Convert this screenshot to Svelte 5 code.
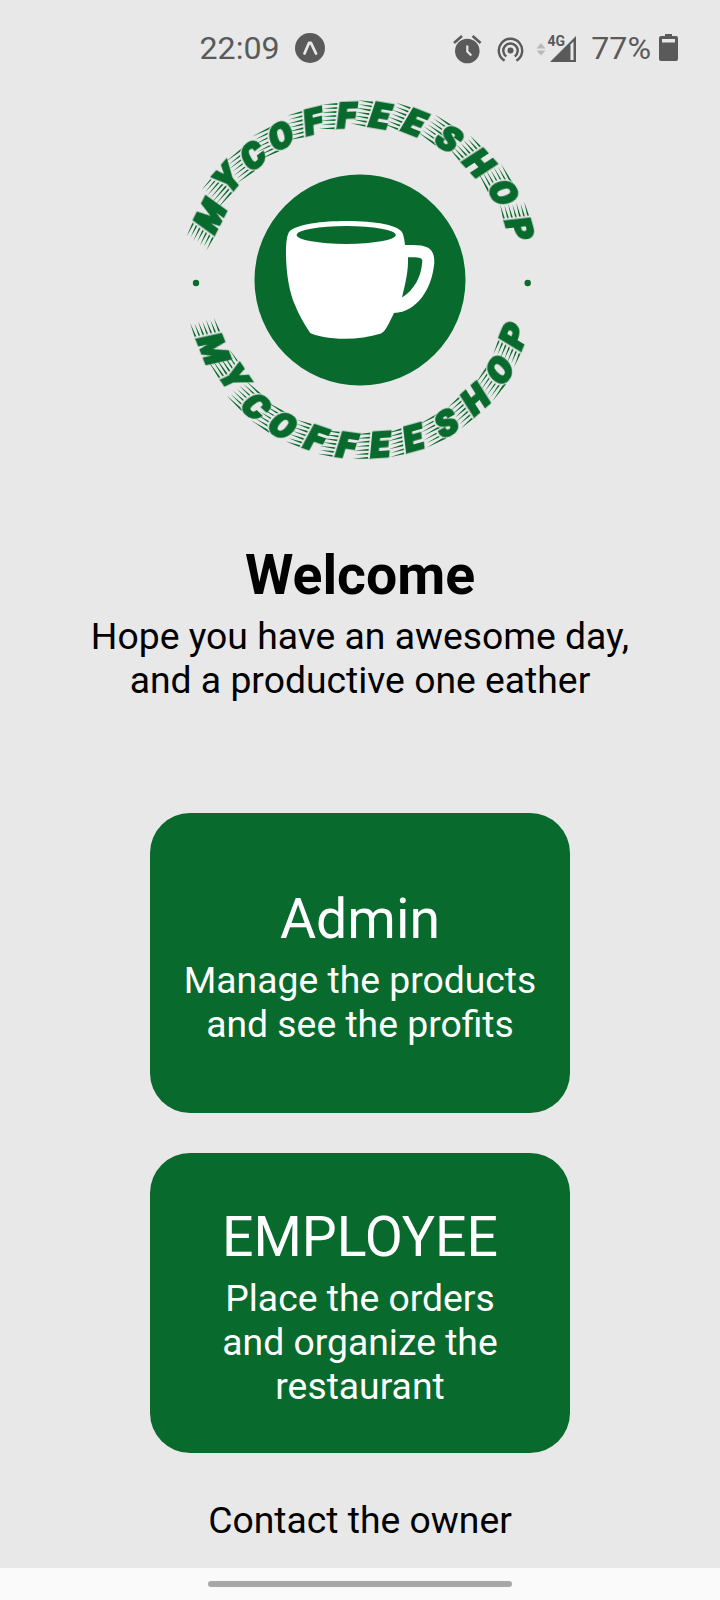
<script>
  const green = '#096a2d';
  const cx = 361;
  const cy = 282;
  const top = [
    ['M', 210.5, 215.7], ['Y', 227.7, 178.3], ['C', 253.3, 155.7], ['O', 281, 136],
    ['F', 313.3, 121.7], ['F', 346.7, 115.7], ['E', 380, 116], ['E', 414.3, 122.7],
    ['S', 449, 139], ['H', 479, 163.3], ['O', 503.3, 192.7], ['P', 519.3, 229]
  ];
  const bottom = [
    ['M', 213.3, 349.3], ['Y', 234, 377.7], ['C', 256, 406.7], ['O', 282.7, 425.7],
    ['F', 315.7, 439], ['F', 346.7, 445.7], ['E', 380, 445], ['E', 413.3, 438.3],
    ['S', 446.7, 423.3], ['H', 475.7, 399.3], ['O', 500, 370], ['P', 514, 335.7]
  ];
  const half = { M: 14, Y: 11, C: 10.5, O: 11, F: 9, E: 9, S: 10.5, H: 11.5, P: 10 };
  const inset = { Y: 8, S: 5, O: 5, C: 5 };
  const deg = 180 / Math.PI;

  function speedLines(ch) {
    const edge = -half[ch];
    let d = '';
    for (let i = 0; i < 7; i++) {
      const y = -12 + i * 4;
      const start = edge - 17 + (i % 2) * 1.5;
      const end = edge + (inset[ch] ?? 1);
      d += `M${start} ${y}L${end} ${y - 1.1}V${y + 1.1}Z`;
    }
    return d;
  }

  const letters = [
    ...top.map(([ch, x, y]) => ({ ch, x, y, r: Math.atan2(x - cx, cy - y) * deg + 3 })),
    ...bottom.map(([ch, x, y]) => ({ ch, x, y, r: -Math.atan2(x - cx, y - cy) * deg + 3 }))
  ];
</script>

<div class="screen">
  <header class="status">
    <span class="clock">22:09</span>
    <svg class="expo" width="30" height="30" viewBox="0 0 30 30">
      <circle cx="15" cy="15" r="15" fill="#5a5a5a" />
      <path d="M9.500 20.500 14 10h2l5 10.500" fill="none" stroke="#e8e8e8" stroke-width="2.800" stroke-linecap="round" stroke-linejoin="round" />
    </svg>
    <svg class="tray" width="130" height="34" viewBox="450 30 130 34">
      <g fill="#5a5a5a">
        <circle cx="468.300" cy="50" r="12.300" />
        <path d="M455 42l8-7M481.600 42l-8-7" stroke="#5a5a5a" stroke-width="2.600" />
        <path d="M468.300 44.500v6l4 4" fill="none" stroke="#e8e8e8" stroke-width="2.200" />
        <circle cx="511.500" cy="49.500" r="3" />
        <g fill="none" stroke="#5a5a5a" stroke-width="2.400">
          <path d="M507.300 55.500a7.200 7.200 0 1 1 8.400 0" />
          <path d="M505.600 59.600a11.700 11.700 0 1 1 11.800 0" />
        </g>
        <path d="M551 61 577 35v26z" />
        <path d="M571.500 43.500 574.500 40.500V59h-3z" fill="#e8e8e8" />
      </g>
      <path d="M537.500 47.500l4.500-5.500 4.500 5.500zM537.500 49.500h9l-4.500 5z" fill="#b9b9b9" />
      <text x="548.500" y="44.500" class="net">4G</text>
    </svg>
    <span class="percent">77%</span>
    <svg class="battery" width="19" height="28" viewBox="0 0 19 28">
      <path d="M6 0h7v2h4a2 2 0 0 1 2 2v21a2 2 0 0 1-2 2H2a2 2 0 0 1-2-2V4a2 2 0 0 1 2-2h4z" fill="#5a5a5a" />
      <path d="M3 5h13v3.500H3z" fill="#e8e8e8" />
    </svg>
  </header>

  <svg class="logo" width="360" height="372" viewBox="180 96 360 372">
    <circle cx="360" cy="280" r="105.500" fill={green} />
    <path fill="#fff" d="M289 232C296 224 322 221 347 221C375 221 399 225 402.500 233C404 237 404.500 241 405 245H412C430 245 434.500 250 434.300 263C432 289 417 312 394 313C389 323 386 331 381 333.500C370 337 357 338.700 345 338.700C330 338.700 315 336 310 332.700C303 322 299 315 295 305C289 292 285.500 270 286 248C286.500 240 287 236 289 232Z" />
    <ellipse cx="346.200" cy="235" rx="49.500" ry="9" fill={green} />
    <path fill={green} d="M408 257.300C417 257 422.500 257 422.300 261C421.500 277 414 290 402 297.500C405.500 283 408.500 271 408 257.300Z" />
    <circle cx="196" cy="283" r="3.200" fill={green} />
    <circle cx="527.700" cy="283" r="3.200" fill={green} />
    {#each letters as l}
      <g transform="translate({l.x} {l.y}) rotate({l.r}) skewX(-9)" fill={green}>
        <path d={speedLines(l.ch)} />
        <text class="glyph" x="0" y="12.300">{l.ch}</text>
      </g>
    {/each}
  </svg>

  <section class="intro">
    <h1>Welcome</h1>
    <p>Hope you have an awesome day,<br />and a productive one eather</p>
  </section>

  <main class="roles">
    <button class="card">
      <span class="title">Admin</span>
      <span class="text">Manage the products<br />and see the profits</span>
    </button>
    <button class="card">
      <span class="title">EMPLOYEE</span>
      <span class="text">Place the orders<br />and organize the<br />restaurant</span>
    </button>
  </main>

  <div class="contact">Contact the owner</div>
  <footer class="nav"><span class="pill"></span></footer>
</div>

<style>
  :global(body) { margin: 0; background: #e8e8e8; }
  .screen {
    width: 720px; height: 1600px; background: #e8e8e8; color: #000;
    font-family: Roboto, sans-serif; font-size: 37.300px; line-height: 44px;
    display: flex; flex-direction: column; align-items: center; overflow: hidden;
  }
  .status {
    width: 720px; height: 96px; box-sizing: border-box; padding: 0 42px 0 199.500px;
    display: flex; align-items: center; flex: none;
    color: #5a5a5a; font-size: 32.200px; font-weight: 450;
  }
  .expo { margin-left: 15px; }
  .tray { margin-left: auto; }
  .percent { margin-left: 12px; }
  .battery { margin-left: 8px; }
  .net { font: 700 14px Roboto, sans-serif; fill: #5a5a5a; }
  .logo { flex: none; overflow: visible; }
  .glyph {
    font: 900 34px Roboto, sans-serif; text-anchor: middle;
    stroke: #096a2d; stroke-width: 2.600px;
    filter: drop-shadow(-1.300px 0 0 #e8e8e8);
  }
  .intro { margin-top: 75px; text-align: center; }
  h1 { margin: 0; font-size: 55.400px; line-height: 66px; font-weight: 700; }
  p { margin: 5px 0 0; }
  .roles { margin-top: 111px; display: flex; flex-direction: column; gap: 40px; }
  .card {
    width: 420px; height: 300px; border: 0; border-radius: 40px; padding: 7px 0 0;
    background: #096a2d; color: #fff; font: inherit; text-align: center;
    display: flex; flex-direction: column; align-items: center; justify-content: center;
  }
  .title { font-size: 55.400px; line-height: 66px; }
  .text { margin-top: 5px; }
  .contact { margin-top: 45px; }
  .nav {
    width: 720px; height: 32px; margin-top: auto; flex: none; background: #fafafa;
    display: flex; align-items: center; justify-content: center;
  }
  .pill { width: 304px; height: 6px; border-radius: 3px; background: #a8a8a8; }
</style>
